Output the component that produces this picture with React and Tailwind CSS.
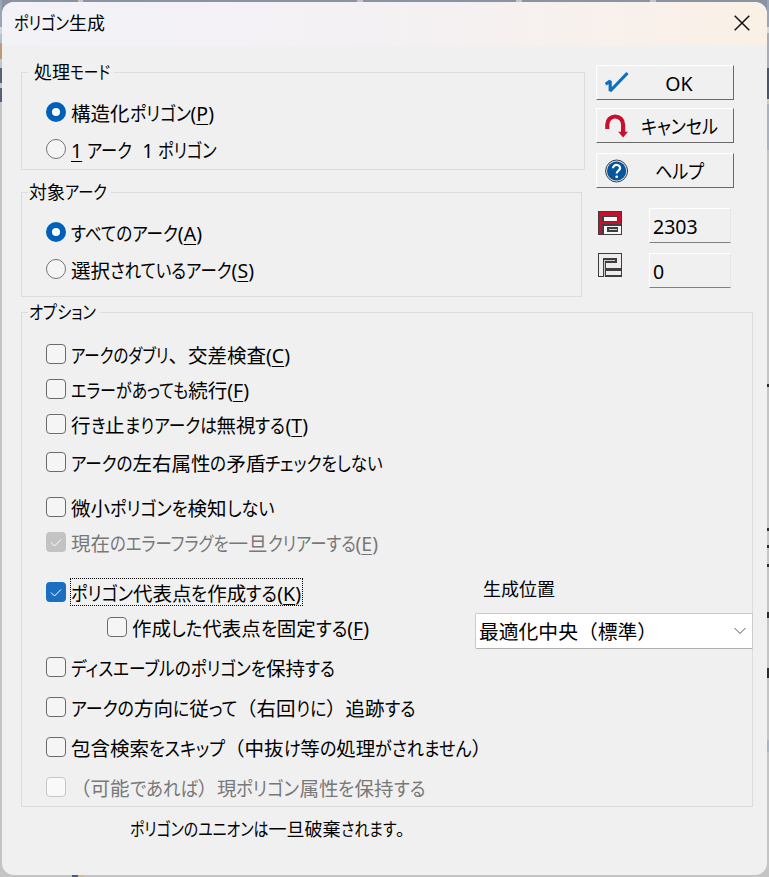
import { useLayoutEffect, useRef } from "react";

const KANA = /([\u3041-\u30ff]+)/;

function renderRun(run, key) {
  if (KANA.test(run)) {
    return (
      <span key={key} data-kana="" className="inline-block origin-left [font-feature-settings:'palt']">
        {run}
      </span>
    );
  }
  // "&X" marks the accelerator key
  const [before, after] = run.split("&");
  if (after === undefined) return <span key={key}>{run}</span>;
  return (
    <span key={key}>
      {before}
      <span className="underline decoration-1 underline-offset-[3px]">{after[0]}</span>
      {after.slice(1)}
    </span>
  );
}

// Condenses only the kana so the whole line takes `width` pixels
function Label({ text, width, className = "" }) {
  const ref = useRef(null);

  useLayoutEffect(() => {
    const el = ref.current;
    const runs = [...el.querySelectorAll("[data-kana]")];
    if (!runs.length) return;
    runs.forEach((r) => {
      r.style.transform = "";
      r.style.marginRight = "";
    });
    const widths = runs.map((r) => r.getBoundingClientRect().width);
    const kana = widths.reduce((a, b) => a + b, 0);
    const rest = el.getBoundingClientRect().width - kana;
    const scale = (width - rest) / kana;
    runs.forEach((r, i) => {
      r.style.transform = `scaleX(${scale})`;
      r.style.marginRight = `${widths[i] * (scale - 1)}px`;
    });
  }, [text, width]);

  return (
    <span ref={ref} className={`inline-block w-max shrink-0 whitespace-pre ${className}`}>
      {text.split(KANA).filter(Boolean).map(renderRun)}
    </span>
  );
}

function Group({ legend, legendWidth, indent = "pl-px", className = "", children }) {
  return (
    <section className={`relative border border-[#dcdcdc] ${className}`}>
      <div className={`absolute -top-[13px] left-1.5 flex h-6 items-center bg-[#f0f0f0] pr-1 text-[18px] leading-6 ${indent}`}>
        <Label text={legend} width={legendWidth} />
      </div>
      {children}
    </section>
  );
}

function Radio({ text, width, checked = false, className = "" }) {
  return (
    <div className={`flex h-5 items-center ${className}`}>
      {checked ? (
        <span className="grid size-5 shrink-0 place-items-center rounded-full bg-[#005fb8]">
          <span className="size-2 rounded-full bg-white" />
        </span>
      ) : (
        <span className="size-5 shrink-0 rounded-full border border-[#757575] bg-[#f5f5f5]" />
      )}
      <Label text={text} width={width} className="ml-[5px] pt-[3px] text-[19.5px] leading-6" />
    </div>
  );
}

function Check({ text, width, checked = false, disabled = false, focused = false, className = "" }) {
  let box = "border border-[#6b6b6b] bg-[#f5f5f5]";
  if (disabled) box = "border border-[#c6c6c6] bg-[#f9f9f9]";
  if (checked) box = disabled ? "bg-[#c3c3c3]" : "bg-[#1a6fc1]";

  return (
    <div className={`flex h-5 items-center ${className}`}>
      <span className={`grid size-5 shrink-0 place-items-center rounded-[4px] ${box}`}>
        {checked ? (
          <svg viewBox="0 0 20 20" className="size-5" fill="none" stroke="white" strokeWidth="1">
            <path d="M5 10.5 8.5 14 15 7.5" />
          </svg>
        ) : null}
      </span>
      <span
        className={`flex h-7 items-center ${
          focused ? "ml-1 border border-dotted border-black pr-px" : "ml-[5px]"
        } ${disabled ? "text-[#787878]" : ""}`}
      >
        <Label text={text} width={width} className="pt-[3px] text-[19.5px] leading-6" />
      </span>
    </div>
  );
}

function ActionButton({ text, width, icon, className = "" }) {
  return (
    <button
      type="button"
      className={`flex h-[35px] w-[138px] items-center border border-t-white border-r-[#696969] border-b-[#696969] border-l-white pl-2 text-[19.5px] ${className}`}
    >
      {icon}
      <span className="flex flex-1 justify-center pt-0.5 pr-1">
        <Label text={text} width={width} />
      </span>
    </button>
  );
}

function CounterField({ value, className = "" }) {
  return (
    <div
      className={`flex h-[35px] w-[82px] items-center border border-t-white border-r-[#e6e6e6] border-b-[#808080] border-l-white pt-0.5 pl-[3px] text-[19.5px] ${className}`}
    >
      {value}
    </div>
  );
}

const okIcon = (
  <svg viewBox="0 0 24 24" className="size-6" fill="none" stroke="#0b70c0" strokeWidth="3.2">
    <path d="M.6 13.2 5.2 10V20L22.5 2" strokeLinejoin="bevel" />
  </svg>
);

const cancelIcon = (
  <svg viewBox="0 0 24 24" className="size-6">
    <path d="M2.3 15V10.4A7.9 7.9 0 0 1 18.1 10.4V18.5" fill="none" stroke="#c8102e" strokeWidth="4.2" />
    <path d="M13.2 17.8H23l-4.9 5.7z" fill="#c8102e" />
  </svg>
);

const helpIcon = (
  <svg viewBox="0 0 24 24" className="size-6">
    <circle cx="11.6" cy="12" r="11" fill="#d8dde2" stroke="#33444f" />
    <circle cx="11.6" cy="12" r="9.6" fill="#07559a" />
    <path d="M8 9.2C8 4.8 15.4 5 15.1 9.2 14.9 11.6 11.7 11.6 11.7 14.6" fill="none" stroke="white" strokeWidth="2.2" />
    <circle cx="11.7" cy="17.8" r="1.4" fill="white" />
  </svg>
);

const closedPolygonIcon = (
  <svg viewBox="0 0 24 24" className="size-6" shapeRendering="crispEdges">
    <path d="M0 0h24v24H0z" fill="#403c3f" />
    <path d="M1 1h22v12H4v10H1z" fill="#c8102e" />
    <path d="M4 5h16v6H4z" fill="#403c3f" />
    <path d="M6 6h13v4H6zM6 15h17v8H6z" fill="#f8f8f8" />
    <path d="M9 16h11v5H9z" fill="#403c3f" />
    <path d="M11 18h8v1h-8z" fill="#d4d4d4" />
  </svg>
);

const openPolygonIcon = (
  <svg viewBox="0 0 24 24" className="size-6" shapeRendering="crispEdges">
    <path d="M0 0h24v24H0z" fill="#403c3f" />
    <path d="M1 1h22v14H8V10h11V5H5v18H1z" fill="#ededed" />
    <path d="M6 7h11v1H7v16H6z" fill="#c9c9c9" />
    <path d="M8 18h15v4H8z" fill="#ededed" />
  </svg>
);

// Slices of the window behind the dialog, [offset, length, colour]
const topMarks = [
  [78, 5, "#c5c3c6"],
  [357, 6, "#c5c3c6"],
  [516, 6, "#c5c3c6"],
  [650, 6, "#c5c3c6"],
];

const leftMarks = [
  [0, 27, "#98a4b8"],
  [27, 7, "#d5d6d8"],
  [34, 9, "#b9c0cb"],
  [43, 16, "#ba9c7c"],
  [59, 9, "#c2c5cd"],
  [68, 15, "#56627a"],
  [83, 5, "#c2c5cd"],
  [88, 14, "#56627a"],
];

const rightMarks = [
  [0, 27, "#98a4b8"],
  [27, 6, "#d5d6d8"],
  [33, 35, "#a8adb8"],
  [68, 31, "#4b566c"],
  [99, 5, "#d5cba8"],
  [104, 46, "#a9b2c1"],
  [384, 3, "#2c2c2c"],
  [528, 3, "#2c2c2c"],
  [545, 3, "#2c2c2c"],
  [564, 3, "#2c2c2c"],
  [612, 6, "#2c2c2c"],
  [668, 10, "#2c2c2c"],
  [740, 12, "#a9b6c6"],
];

function EdgeMarks({ marks, className }) {
  return (
    <div className={`absolute ${className}`}>
      {marks.map(([top, height, background]) => (
        <div key={top} className="absolute w-full" style={{ top, height, background }} />
      ))}
    </div>
  );
}

export default function App() {
  return (
    <div className="relative h-[877px] w-[769px] overflow-hidden bg-[linear-gradient(#8b93a2_0_27px,#c4c4c4_27px)] p-0.5 font-['Noto_Sans','Noto_Sans_CJK_JP',sans-serif] text-black">
      <EdgeMarks marks={leftMarks} className="inset-y-0 left-0 w-0.5" />
      <EdgeMarks marks={rightMarks} className="inset-y-0 right-0 w-0.5" />
      {topMarks.map(([left, width, background]) => (
        <div key={left} className="absolute top-0 h-0.5" style={{ left, width, background }} />
      ))}
      <div className="absolute bottom-0 left-[72px] h-0.5 w-3 bg-[linear-gradient(90deg,#4f5b7c_6px,#cabf9c_6px)]" />

      <div className="relative flex h-[873px] w-[765px] flex-col overflow-hidden rounded-xl bg-[#f0f0f0]">
        <header className="flex h-[43px] shrink-0 items-center justify-between bg-linear-to-r from-[#f2f2f7] via-[#f4f1f4] to-[#faf0e6] pr-[17px] pl-3">
          <Label text="ポリゴン生成" width={91} className="-mt-0.5 text-[18px] leading-6" />
          <svg viewBox="0 0 16 16" className="-mt-0.5 size-4" fill="none" stroke="#111" strokeWidth="1.5">
            <path d="M.7.7l14.6 14.6M15.3.7.7 15.3" />
          </svg>
        </header>

        <div className="flex pl-[19px]">
          <div className="w-[575px] pt-[27px]">
            <Group legend="処理モード" legendWidth={76} indent="pl-1.5" className="h-[98px] w-[564px] pt-[29px] pl-6">
              <Radio text="構造化ポリゴン(&P)" width={143} checked />
              <Radio text="&1 アーク  1 ポリゴン" width={146} className="mt-[17px]" />
            </Group>
            <Group legend="対象アーク" legendWidth={78} className="mt-[22px] h-[105px] w-[561px] pt-[29px] pl-6">
              <Radio text="すべてのアーク(&A)" width={131} checked />
              <Radio text="選択されているアーク(&S)" width={183} className="mt-[17px]" />
            </Group>
          </div>
          <div className="pt-5">
            <ActionButton text="OK" icon={okIcon} />
            <ActionButton text="キャンセル" width={77} icon={cancelIcon} className="mt-2" />
            <ActionButton text="ヘルプ" width={49} icon={helpIcon} className="mt-2.5" />
            <div className="mt-5 flex gap-[27px] pl-0.5">
              <div className="flex flex-col gap-[18px] pt-[3px]">
                {closedPolygonIcon}
                {openPolygonIcon}
              </div>
              <div className="flex flex-col gap-2.5">
                <CounterField value="2303" />
                <CounterField value="0" />
              </div>
            </div>
          </div>
        </div>

        <Group legend="オプション" legendWidth={67} className="mt-[15px] ml-[19px] h-[495px] w-[732px] shrink-0 pt-[31px] pl-6">
          <Check text="アークのダブリ、交差検査(&C)" width={219} />
          <Check text="エラーがあっても続行(&F)" width={178} className="mt-[15px]" />
          <Check text="行き止まりアークは無視する(&T)" width={237} className="mt-[15px]" />
          <Check text="アークの左右属性の矛盾チェックをしない" width={312} className="mt-[18px]" />
          <Check text="微小ポリゴンを検知しない" width={203} className="mt-[25px]" />
          <Check text="現在のエラーフラグを一旦クリアーする(&E)" width={307} checked disabled className="mt-[15px]" />
          <div className="mt-[30px] flex h-[55px] justify-between">
            <div>
              <Check text="ポリゴン代表点を作成する(&K)" width={230} checked focused />
              <Check text="作成した代表点を固定する(&F)" width={237} className="mt-[15px] ml-[61px]" />
            </div>
            <div className="-mr-px w-[278px] shrink-0">
              <div className="-mt-[5px] ml-2 text-[18px] leading-6">
                <Label text="生成位置" width={72} />
              </div>
              <div className="mt-3 flex h-9 items-center justify-between rounded-l-xs border border-[#cccccc] border-b-[#b0b0b0] bg-white pr-1.5 pl-[3px] text-[19.8px]">
                <Label text="最適化中央（標準）" width={176} className="pt-0.5" />
                <svg viewBox="0 0 12 8" className="h-2 w-3" fill="none" stroke="#555">
                  <path d="M.5 1 6 6.5 11.5 1" />
                </svg>
              </div>
            </div>
          </div>
          <Check text="ディスエーブルのポリゴンを保持する" width={264} className="mt-5" />
          <Check text="アークの方向に従って（右回りに）追跡する" width={344} className="mt-5" />
          <Check text="包含検索をスキップ（中抜け等の処理がされません）" width={420} className="mt-5" />
          <Check text="（可能であれば）現ポリゴン属性を保持する" width={354} disabled className="mt-5" />
        </Group>

        <div className="mt-2.5 ml-32 text-[18px] leading-6">
          <Label text="ポリゴンのユニオンは一旦破棄されます。" width={284} />
        </div>
      </div>
    </div>
  );
}
